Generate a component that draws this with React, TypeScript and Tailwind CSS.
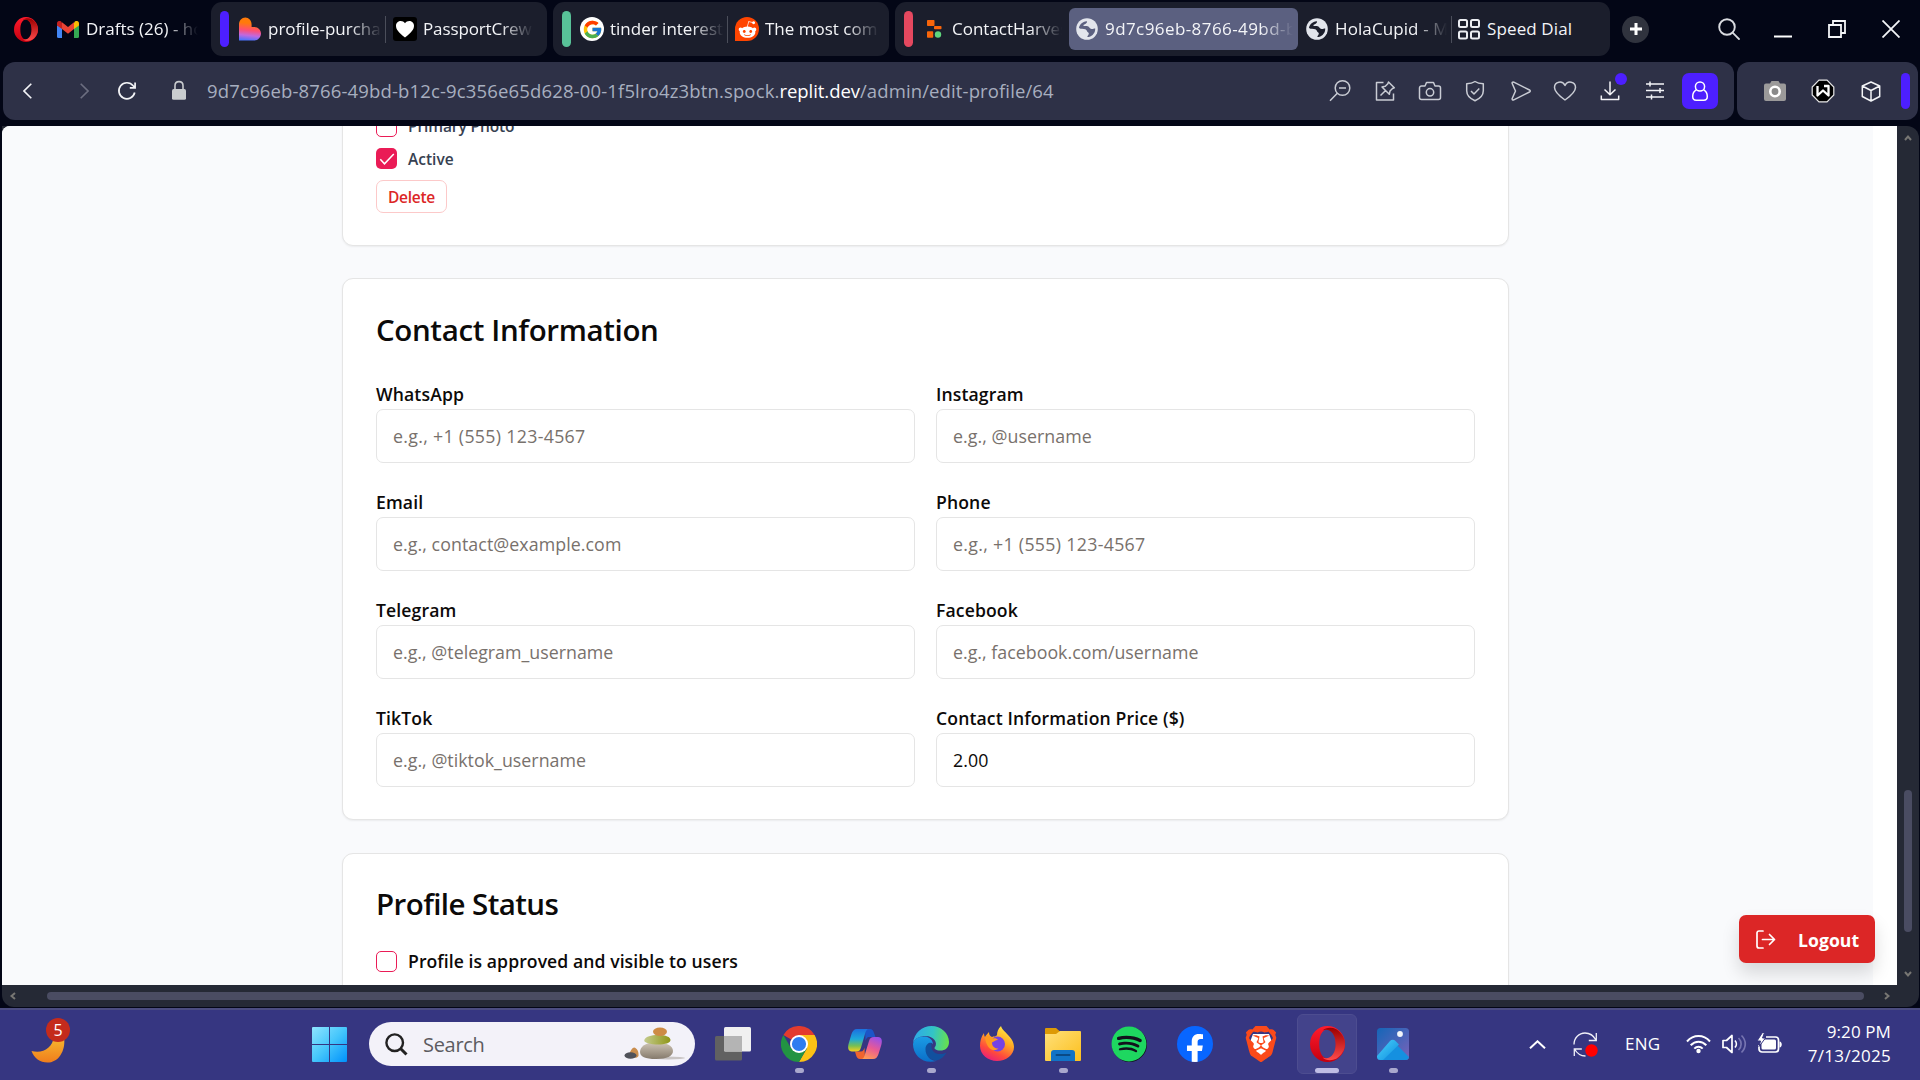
import type { ReactNode } from "react";
import { FcGoogle } from "react-icons/fc";
import { FaFacebookF, FaRedditAlien, FaSpotify } from "react-icons/fa";
import { SiBrave } from "react-icons/si";

/* ---------- Brand and app icons ---------- */

function OperaIcon({ className, id }: { className: string; id: string }) {
  return (
    <svg className={className} viewBox="0 0 36 40" preserveAspectRatio="none">
      <defs>
        <linearGradient id={`${id}a`} x1="0" y1="0" x2="0" y2="1">
          <stop offset="0" stopColor="#ff1b2d" />
          <stop offset="1" stopColor="#c4000f" />
        </linearGradient>
        <linearGradient id={`${id}b`} x1="0" y1="0" x2="0" y2="1">
          <stop offset="0" stopColor="#9c0000" />
          <stop offset="1" stopColor="#ff4b4b" />
        </linearGradient>
      </defs>
      <path fillRule="evenodd" fill={`url(#${id}a)`} d="M18 0a18 20 0 1 0 0 40a18 20 0 1 0 0-40Zm0 4c5.500 0 8.500 7 8.500 16s-3 16-8.500 16s-8.500-7-8.500-16s3-16 8.500-16Z" />
      <path fill={`url(#${id}b)`} d="M13 5c3-3.500 9-4 14-1.500C32 7 36 13 36 20s-4 13-9 16.500c-5 2.500-11 2-14-1.500c7 3.500 13.500-4 13.500-15S20 1.500 13 5Z" />
    </svg>
  );
}

function GmailIcon() {
  return (
    <svg className="h-[17px] w-[22px]" viewBox="0 0 22 17">
      <path fill="#4285f4" d="M0 4v11.500A1.500 1.500 0 0 0 1.500 17H5V7Z" />
      <path fill="#34a853" d="M22 4v11.500a1.500 1.500 0 0 1-1.500 1.500H17V7Z" />
      <path fill="#fbbc04" d="M17 2v6l5-3.500V2.500C22 .2 19.500-.8 17.800.5Z" />
      <path fill="#c5221f" d="M0 2.500v2L5 8V2L4.200.5C2.500-.8 0 .2 0 2.500Z" />
      <path fill="#ea4335" d="M5 8V1.200L11 6l6-4.800V8l-6 4.700Z" />
    </svg>
  );
}

function LovableIcon() {
  return (
    <svg className="h-6 w-6" viewBox="0 0 24 24">
      <defs>
        <linearGradient id="lov" x1=".5" y1="0" x2=".4" y2="1">
          <stop offset=".25" stopColor="#ff7a0a" />
          <stop offset=".55" stopColor="#ff4f72" />
          <stop offset=".78" stopColor="#c069e0" />
          <stop offset="1" stopColor="#4b73ff" />
        </linearGradient>
      </defs>
      <path fill="url(#lov)" d="M1 7.500C1 3.600 3.800.5 7.300.5s6.300 3 6.300 7v2.400h2.800c3.800 0 6.600 3 6.600 6.600s-2.900 7-6.600 7H1Z" />
    </svg>
  );
}

function HeartBadge() {
  return (
    <svg className="h-6 w-6" viewBox="0 0 24 24">
      <rect width="24" height="24" rx="3" fill="#000" />
      <path fill="#fff" d="M12 20.500C5.500 15.500 3 12.500 3 8.800c0-5 6.300-6.600 9-2.600c2.700-4 9-2.400 9 2.600c0 3.700-2.500 6.700-9 11.700Z" />
    </svg>
  );
}

function GoogleBadge() {
  return (
    <span className="flex h-6 w-6 items-center justify-center rounded-full bg-white">
      <FcGoogle className="h-[21px] w-[21px]" />
    </span>
  );
}

function RedditBadge() {
  return (
    <span className="flex h-6 w-6 items-center justify-center rounded-full rounded-bl-[3px] bg-[#ff4500]">
      <FaRedditAlien className="h-[19px] w-[19px] text-white" />
    </span>
  );
}

function ReplitIcon() {
  return (
    <svg className="h-6 w-6" viewBox="0 0 24 24">
      <rect x="5" y="3" width="7.500" height="6" rx=".8" fill="#f9650a" />
      <rect x="12" y="9" width="7.500" height="3.200" rx=".8" fill="#f9650a" />
      <rect x="5" y="14.300" width="6.200" height="6.500" rx=".8" fill="#f9650a" />
      <circle cx="16" cy="17.500" r="3.200" fill="#5fd57c" />
    </svg>
  );
}

function GlobeIcon({ land }: { land: string }) {
  return (
    <svg className="h-[22px] w-[22px] shrink-0" viewBox="0 0 22 22">
      <circle cx="11" cy="11" r="10.800" fill="#e2e5ec" />
      <path fill={land} d="M10.500 3.200c-4 .5-7.200 3.500-7.500 6.800c2 1.700 4.300.8 6.300 1.300c1.900.6 1.300 2.300 2.900 3.200c1.100.6.600 2.200-.6 3.500c-.8.9.2 1.300 1.200 1c4-1.300 6.600-4.500 6.400-8.600c-1.500-.2-2 1-3.700.6c-2-.5-2-2.300-3.800-2.800c-1.600-.5-3.200.1-4.200-.5c-.8-.8 1.100-1.200 2.200-1.900c1.200-.9 2-2.500.8-2.600Z" />
    </svg>
  );
}

function SpeedDialIcon() {
  return (
    <svg className="h-[21px] w-[22px]" viewBox="0 0 22 21" fill="none" stroke="#eceef2" strokeWidth="2">
      <rect x="1" y="1" width="8" height="7" rx="1.500" />
      <rect x="13" y="1" width="8" height="7" rx="1.500" />
      <rect x="1" y="12.500" width="8" height="7" rx="1.500" />
      <rect x="13" y="12.500" width="8" height="7" rx="1.500" />
    </svg>
  );
}

/* ---------- Tab bar ---------- */

const fade = "overflow-hidden whitespace-nowrap [mask-image:linear-gradient(to_right,black_calc(100%-34px),transparent_calc(100%-2px))]";

function TabText({ children, className }: { children: ReactNode; className: string }) {
  return <span className={`${fade} shrink-0 text-[17px] leading-6 text-[#f3f4f7] ${className}`}>{children}</span>;
}

function Divider({ className = "w-px" }: { className?: string }) {
  return <span className={`h-[27px] shrink-0 bg-[#4b4e5a] ${className}`} />;
}

function TabBar() {
  return (
    <header className="flex h-[58px] items-center pl-3.5 pr-5">
      <OperaIcon id="op1" className="h-[25px] w-6" />
      <div className="ml-[19px] flex items-center gap-[7px]">
        <GmailIcon />
        <TabText className="w-[114px]">Drafts (26) - ho</TabText>
      </div>

      <div className="ml-[11px] flex h-[54px] w-[336px] items-center rounded-[11px] bg-[#1b1e2c] pl-[9px]">
        <span className="h-9 w-[9px] rounded-full bg-[#4d1fff]" />
        <div className="ml-[9px] flex items-center gap-1.5">
          <LovableIcon />
          <TabText className="w-[116px]">profile-purchas</TabText>
        </div>
        <Divider className="ml-px w-px" />
        <div className="ml-[7px] flex items-center gap-1.5">
          <HeartBadge />
          <TabText className="w-[112px] tracking-[-0.12px]">PassportCrew</TabText>
        </div>
      </div>

      <div className="ml-1.5 flex h-[54px] w-[336px] items-center rounded-[11px] bg-[#1b1e2c] pl-[9px]">
        <span className="h-9 w-[9px] rounded-full bg-[#58c298]" />
        <div className="ml-[9px] flex items-center gap-1.5">
          <GoogleBadge />
          <TabText className="w-[116px]">tinder interests</TabText>
        </div>
        <Divider className="ml-px w-px" />
        <div className="ml-[7px] flex items-center gap-1.5">
          <RedditBadge />
          <TabText className="w-[116px]">The most comm</TabText>
        </div>
      </div>

      <div className="ml-1.5 flex h-[54px] w-[715px] items-center rounded-[11px] bg-[#1b1e2c] pl-[9px]">
        <span className="h-9 w-[9px] rounded-full bg-[#e5485f]" />
        <div className="ml-[9px] flex items-center gap-1.5">
          <ReplitIcon />
          <TabText className="w-[112px]">ContactHarves</TabText>
        </div>
        <div className="ml-[5px] flex h-[42px] w-[229px] items-center gap-[7px] rounded-md bg-[#5b6080] pl-[7px]">
          <GlobeIcon land="#5b6080" />
          <TabText className="w-[190px] tracking-[0.42px]">9d7c96eb-8766-49bd-b1</TabText>
        </div>
        <div className="ml-[8px] flex items-center gap-[7px]">
          <GlobeIcon land="#1b1e2c" />
          <TabText className="w-[114px] tracking-[0.1px]">HolaCupid - Me</TabText>
        </div>
        <Divider className="ml-[2px] w-px" />
        <div className="ml-1.5 flex items-center gap-[7px]">
          <SpeedDialIcon />
          <span className="whitespace-nowrap text-[17px] leading-6 tracking-[0.12px] text-[#f3f4f7]">Speed Dial</span>
        </div>
      </div>

      <button className="ml-3 flex h-[27px] w-[27px] items-center justify-center rounded-full bg-[#30333e]">
        <svg className="h-3.5 w-3.5" viewBox="0 0 14 14" stroke="#fff" strokeWidth="3">
          <path d="M7 1v12M1 7h12" />
        </svg>
      </button>

      <div className="ml-auto flex items-center">
        <svg className="h-[22px] w-[22px]" viewBox="0 0 22 22" fill="none" stroke="#d9dbe0" strokeWidth="1.900">
          <circle cx="9" cy="9" r="7.800" />
          <path d="m14.600 14.600 7 7" />
        </svg>
        <svg className="ml-[34px] h-[18px] w-[18px]" viewBox="0 0 18 18">
          <path d="M0 16.500h18" stroke="#fff" strokeWidth="2" />
        </svg>
        <svg className="ml-9 h-[18px] w-[18px]" viewBox="0 0 18 18" fill="none" stroke="#f3f4f7" strokeWidth="1.800">
          <path d="M1 5h12v12H1ZM5 5V1h12v12h-4" />
        </svg>
        <svg className="ml-9 h-[18px] w-[18px]" viewBox="0 0 18 18" fill="none" stroke="#f3f4f7" strokeWidth="1.800">
          <path d="m.5.5 17 17M17.500.5l-17 17" />
        </svg>
      </div>
    </header>
  );
}

/* ---------- Address bar ---------- */

function LineIcon({ children, className = "" }: { children: ReactNode; className?: string }) {
  return (
    <svg className={`h-6 w-6 shrink-0 ${className}`} viewBox="0 0 24 24" fill="none" stroke="#c9ccd4" strokeWidth="1.500" strokeLinejoin="round">
      {children}
    </svg>
  );
}

function AddressBar() {
  return (
    <div className="mt-1 flex h-[58px] gap-[3px] pl-[3px] pr-0.5">
      <div className="flex w-[1731px] items-center rounded-xl bg-[#2e3147]">
        <svg className="ml-5 h-4 w-[9px]" viewBox="0 0 9 16" fill="none" stroke="#f3f4f7" strokeWidth="1.600">
          <path d="M8.300.7 1 8l7.300 7.300" />
        </svg>
        <svg className="ml-12 h-4 w-[9px]" viewBox="0 0 9 16" fill="none" stroke="#6c6e80" strokeWidth="1.600">
          <path d="M.7.700 8 8 .7 15.300" />
        </svg>
        <svg className="ml-7 h-5 w-5" viewBox="0 0 20 20" fill="none" stroke="#f3f4f7" strokeWidth="1.700">
          <path d="M17.700 11.500a8 8 0 1 1-1.500-6.700l1.300 1.500M18.100 1.500v5.300h-5.300" />
        </svg>
        <svg className="-mt-0.5 ml-[35px] h-[21px] w-[14px]" viewBox="0 0 15 21">
          <path d="M3.200 9V5.500C3.200 2.800 5 1 7.500 1s4.300 1.800 4.300 4.500V9" fill="none" stroke="#c9cccf" strokeWidth="1.700" />
          <rect y="9" width="15" height="11.500" rx="1.800" fill="#c9cccf" />
        </svg>
        <div className="ml-[21px] whitespace-nowrap text-[18.5px] leading-6 text-[#a7aebf]">
          <span className="tracking-[0.15px]">9d7c96eb-8766-49bd-b12c-9c356e65d628-00-1f5lro4z3btn.spock.</span>
          <span className="tracking-[-0.06px] text-white">replit.dev</span>
          <span className="tracking-[0.12px]">/admin/edit-profile/64</span>
        </div>
        <div className="ml-auto flex items-center pr-4">
          <LineIcon>
            <circle cx="14.500" cy="9" r="7.300" />
            <path d="M11 9h7M9.300 14.200 2 21.800" />
          </LineIcon>
          <LineIcon className="ml-[21px]">
            <path d="M10.500 3.500h-7v17.500h17v-6.500M15.500 3l5.800 5.800-1.800.7-2.500 2.500-.7 3.300-7.300-7.300 3.300-.7 2.500-2.500ZM12.300 11.800 7.500 16.500" />
          </LineIcon>
          <LineIcon className="ml-[21px]">
            <path d="M3.500 7H7l1.500-3.500h7L17 7h3.500a2 2 0 0 1 2 2v9.500a2 2 0 0 1-2 2h-17a2 2 0 0 1-2-2V9a2 2 0 0 1 2-2Z" />
            <circle cx="12" cy="13.300" r="3.700" />
          </LineIcon>
          <LineIcon className="ml-[21px]">
            <path d="M12 2.500c2.500 1.700 5 2.200 8.300 2.300v7c0 4.700-3 7.700-8.300 10c-5.300-2.300-8.300-5.300-8.300-10v-7c3.300-.1 5.800-.6 8.300-2.300ZM8 12l3 3 5.300-5.500" />
          </LineIcon>
          <LineIcon className="ml-[22px]">
            <path d="M4.800 3.200 20.500 11c1 .5 1 1.500 0 2L4.800 20.800c-1.300.6-2-.4-1.500-1.500L6.500 12 3.300 4.700c-.5-1.100.2-2.100 1.500-1.500Z" />
          </LineIcon>
          <LineIcon className="ml-[20px]">
            <path d="M12 21C5 16 1.500 12.500 1.500 8.500c0-6 8-7.500 10.500-2c2.500-5.500 10.500-4 10.500 2C22.500 12.500 19 16 12 21Z" />
          </LineIcon>
          <div className="relative ml-[21px] h-6 w-6">
            <LineIcon>
              <path stroke="#f3f4f7" d="M12 2.500v13M6.500 10.500l5.500 5.300 5.500-5.300M3.300 16.500v4h17.400v-4" />
            </LineIcon>
            <span className="absolute -top-1.5 left-[17px] h-3 w-3 rounded-full bg-[#4d1fff]" />
          </div>
          <LineIcon className="ml-[21px]">
            <path stroke="#f3f4f7" d="M3 5h18M3 11.500h18M3 18h18M7 2.500v5M17 9v5M8.500 15.500v5" />
          </LineIcon>
          <button className="ml-[15px] flex h-9 w-9 items-center justify-center rounded-[7px] bg-[#4d1fff]">
            <svg className="h-5 w-5" viewBox="0 0 20 20" fill="none" stroke="#fff" strokeWidth="1.500">
              <circle cx="10" cy="5.500" r="4.600" />
              <path d="M6.500 8.700C4 10.200 2.700 12.500 2.700 15.500c0 2.500 1.300 3.700 3.500 3.700h7.600c2.200 0 3.500-1.200 3.500-3.700c0-3-1.300-5.300-3.800-6.800" />
            </svg>
          </button>
        </div>
      </div>

      <div className="flex flex-1 items-center rounded-xl bg-[#2e3147] pl-[26px]">
        <svg className="h-[22px] w-6" viewBox="0 0 24 22">
          <path fill="#9b9a9a" d="M3 3.500h4L8.500 1h7L17 3.500h4a2 2 0 0 1 2 2V19a2 2 0 0 1-2 2H3a2 2 0 0 1-2-2V5.500a2 2 0 0 1 2-2Z" />
          <circle cx="12" cy="11.500" r="4.700" fill="#8a8a8a" stroke="#fff" strokeWidth="2.600" />
        </svg>
        <svg className="ml-6 h-6 w-6" viewBox="0 0 24 24" fill="none">
          <path fill="#000" stroke="#e8e8e8" strokeWidth="1.200" d="M8 1.200h8L22.800 8v8L16 22.800H8L1.200 16V8Z" />
          <path stroke="#fff" strokeWidth="2.300" strokeLinejoin="round" d="M6.500 7v9.500l5.500-5 5.500 5V7h-4.500" />
        </svg>
        <svg className="ml-[26px] h-[21px] w-5" viewBox="0 0 20 21" fill="none" stroke="#f3f4f7" strokeWidth="1.500" strokeLinejoin="round">
          <path d="m10 1 8.700 4v10.500L10 20l-8.700-4.500V5ZM1.300 5 10 9.500 18.700 5M10 9.500V20" />
        </svg>
        <span className="ml-auto mr-2 h-9 w-[9px] rounded-full bg-[#4d1fff]" />
      </div>
    </div>
  );
}

/* ---------- Profile form ---------- */

function Card({ children, className = "" }: { children: ReactNode; className?: string }) {
  return (
    <section className={`ml-[340px] w-[1167px] rounded-[11px] border border-[#e5e5e5] bg-white px-[33px] shadow-[0_1px_2px_rgba(0,0,0,0.06)] ${className}`}>
      {children}
    </section>
  );
}

function Checkbox({ checked = false }: { checked?: boolean }) {
  return checked ? (
    <span className="flex h-[21px] w-[21px] items-center justify-center rounded-[5px] bg-[#ea1b56]">
      <svg className="h-4 w-4" viewBox="0 0 16 16" fill="none" stroke="#fff" strokeWidth="1.500">
        <path d="m1.300 8.300 4.200 4.500L14.800 3" />
      </svg>
    </span>
  ) : (
    <span className="h-[21px] w-[21px] rounded-[5px] border border-[#ea1b56]" />
  );
}

const fields = [
  { label: "WhatsApp", placeholder: "e.g., +1 (555) 123-4567", tracking: "tracking-[0.3px]" },
  { label: "Instagram", placeholder: "e.g., @username", tracking: "tracking-[0.05px]" },
  { label: "Email", placeholder: "e.g., contact@example.com", tracking: "tracking-[0.07px]" },
  { label: "Phone", placeholder: "e.g., +1 (555) 123-4567", tracking: "tracking-[0.3px]" },
  { label: "Telegram", placeholder: "e.g., @telegram_username", tracking: "tracking-[0.02px]" },
  { label: "Facebook", placeholder: "e.g., facebook.com/username", tracking: "tracking-[0.02px]" },
  { label: "TikTok", placeholder: "e.g., @tiktok_username", tracking: "tracking-[0.03px]" },
  { label: "Contact Information Price ($)", value: "2.00", tracking: "tracking-[0.1px]" },
];

function ProfilePage() {
  return (
    <main className="relative flex-1 overflow-hidden rounded-tl-lg bg-white">
      <div className="flow-root h-full w-[1871px] bg-[#f9fafc]">
        <Card className="-mt-10 flex h-[160px] flex-col items-start gap-[11px] pt-[29px]">
          <div className="flex h-[21px] items-center gap-[11px]">
            <Checkbox />
            <span className="text-[15.5px] font-semibold leading-[21px] tracking-[-0.1px] text-[#374151]">Primary Photo</span>
          </div>
          <div className="flex h-[21px] items-center gap-[11px]">
            <Checkbox checked />
            <span className="pt-0.5 text-[15.5px] font-semibold leading-[21px] text-[#374151]">Active</span>
          </div>
          <button className="h-[33px] w-[71px] rounded-[7px] border border-[#fcc9c9] pt-0.5 text-[15.5px] font-semibold leading-none tracking-[-0.25px] text-[#dc2626]">
            Delete
          </button>
        </Card>

        <Card className="mt-8 h-[542px] pt-8">
          <h2 className="pt-px text-[29.5px] font-semibold leading-9 tracking-[-0.36px] text-[#0c0a09]">Contact Information</h2>
          <div className="mt-[35px] grid grid-cols-2 gap-x-[21px] gap-y-7">
            {fields.map((f) => (
              <label key={f.label} className="block">
                <span className="block pb-[3px] text-[17.6px] font-semibold leading-[23px] tracking-[0.12px] text-[#0c0a09]">{f.label}</span>
                <input
                  className={`block h-[54px] w-full rounded-[7px] border border-[#e5e5e5] bg-white px-4 text-[17.8px] text-[#0c0a09] placeholder:text-[#78716c] ${f.tracking}`}
                  placeholder={f.placeholder}
                  defaultValue={f.value}
                />
              </label>
            ))}
          </div>
        </Card>

        <Card className="mt-[33px] h-[200px] pt-8">
          <h2 className="text-[29.5px] font-semibold leading-9 tracking-[-0.58px] text-[#0c0a09]">Profile Status</h2>
          <div className="mt-[29px] flex items-center gap-[11px]">
            <Checkbox />
            <span className="text-[17.6px] font-semibold leading-[21px] tracking-[0.07px] text-[#0c0a09]">Profile is approved and visible to users</span>
          </div>
        </Card>
      </div>

      <button className="absolute bottom-[22px] right-[22px] flex h-12 w-[136px] items-center rounded-[7px] bg-[#dc2626] pl-[17px] text-white shadow-[0_10px_18px_rgba(0,0,0,0.14)]">
        <svg className="h-[19px] w-5" viewBox="0 0 20 19" fill="none" stroke="#fff" strokeWidth="1.700" strokeLinecap="round" strokeLinejoin="round">
          <path d="M7 1H3a2 2 0 0 0-2 2v13a2 2 0 0 0 2 2h4M6.500 9.500h12M13.500 4.500l5 5-5 5" />
        </svg>
        <span className="ml-[22px] pt-0.5 text-[17.6px] font-bold leading-6 tracking-[0.05px]">Logout</span>
      </button>
    </main>
  );
}

function Arrow({ className, d }: { className: string; d: string }) {
  return (
    <svg className={className} viewBox="0 0 8 8" fill="none" stroke="#777673" strokeWidth="2">
      <path d={d} />
    </svg>
  );
}

function Viewport() {
  return (
    <div className="ml-0.5 mr-px mt-1.5 flex h-[881px] flex-col overflow-hidden rounded-bl-xl rounded-r-xl bg-[#252935]">
      <div className="flex h-[859px]">
        <ProfilePage />
        <div className="flex w-[22px] flex-col items-center pb-[7px] pt-2">
          <Arrow className="h-2 w-2" d="m1 6 3-3.500L7 6" />
          <span className="mt-auto h-[142px] w-2 rounded-full bg-[#4a4c62]" />
          <Arrow className="mt-[38px] h-2 w-2" d="m1 2 3 3.500L7 2" />
        </div>
      </div>
      <div className="flex flex-1 items-center pl-[7px]">
        <Arrow className="h-2 w-2" d="M6 1 2.500 4 6 7" />
        <span className="ml-[30px] h-2 w-[1817px] rounded-full bg-[#4a4c62]" />
        <Arrow className="ml-[19px] h-2 w-2" d="m2 1 3.500 3L2 7" />
      </div>
    </div>
  );
}

/* ---------- Taskbar ---------- */

function MoonWidget() {
  return (
    <div className="relative mb-1 ml-[31px] h-12 w-10">
      <svg className="absolute left-0 top-[19px] h-[26px] w-[34px]" viewBox="0 0 34 26">
        <defs>
          <linearGradient id="moon" x1="0" y1="0" x2="0" y2="1">
            <stop offset="0" stopColor="#f7b92f" />
            <stop offset="1" stopColor="#f07d1c" />
          </linearGradient>
        </defs>
        <path fill="url(#moon)" d="M.5 14C12 17 21 11 23 0h10c2 13-5 25.500-16.500 25.500C9 25.500 3 21 .5 14Z" />
      </svg>
      <span className="absolute left-[15px] top-0 flex h-6 w-6 items-center justify-center rounded-full bg-[#c42b1c] text-[16px] leading-none text-white">5</span>
    </div>
  );
}

function WindowsIcon() {
  return (
    <svg className="h-[35px] w-[35px]" viewBox="0 0 35 35">
      <defs>
        <linearGradient id="win" x1="0" y1="0" x2="1" y2="1">
          <stop offset="0" stopColor="#8fe5ff" />
          <stop offset=".5" stopColor="#45c6fb" />
          <stop offset="1" stopColor="#0091fb" />
        </linearGradient>
      </defs>
      <path fill="url(#win)" d="M1 0h16v17H0V1a1 1 0 0 1 1-1ZM18 0h16a1 1 0 0 1 1 1v16H18ZM0 18h17v17H1a1 1 0 0 1-1-1ZM18 18h17v16a1 1 0 0 1-1 1H18Z" />
    </svg>
  );
}

function Stones() {
  return (
    <svg className="h-[34px] w-[62px]" viewBox="0 0 62 34">
      <defs>
        <linearGradient id="st1" x1="0" y1="0" x2="0" y2="1">
          <stop offset="0" stopColor="#cfc5b5" />
          <stop offset="1" stopColor="#857a6c" />
        </linearGradient>
        <linearGradient id="st2" x1="0" y1="0" x2="1" y2="0">
          <stop offset="0" stopColor="#c4cb8e" />
          <stop offset="1" stopColor="#8f9617" />
        </linearGradient>
      </defs>
      <ellipse cx="44" cy="31" rx="17" ry="1.500" fill="#c9c5c4" />
      <path fill="url(#st1)" d="M16 25c0-5 5-9 13-9.500c11-.5 20 2 20 8.500c0 5-6 8-17 8s-16-2.500-16-7Z" />
      <path fill="url(#st2)" d="M20.500 12.500C22 9.500 27 8 34 8c8 0 12.500 2 12.500 5s-5.500 4.500-12.500 4.500S18.500 16 20.500 12.500Z" />
      <ellipse cx="36" cy="4.800" rx="7" ry="4.200" fill="#cd8b45" />
      <path fill="#c98d4d" d="M5 28c1-4 3-7 5-7.500c3 .5 5 4 4.500 8.500c-1 2-5 2.500-6 1Z" />
      <ellipse cx="6.500" cy="28.500" rx="6" ry="3.300" fill="#50525a" />
    </svg>
  );
}

function TaskViewIcon() {
  return (
    <svg className="h-9 w-9" viewBox="0 0 36 36">
      <rect x="0" y="10" width="27" height="24.500" rx="1.500" fill="#616161" />
      <rect x="9" y="1" width="27" height="24.500" rx="1.500" fill="#f0f0f0" />
      <path fill="#b4b4b4" d="M9 10h18v15.500H10.500A1.500 1.500 0 0 1 9 24Z" />
    </svg>
  );
}

function ChromeIcon() {
  return (
    <svg className="h-9 w-9" viewBox="0 0 36 36">
      <path fill="#e33b2e" d="M18 18 2.400 9a18 18 0 0 1 31.200 0Z" />
      <path fill="#fbc116" d="M18 9h15.600A18 18 0 0 1 18 36l7.800-13.500Z" />
      <path fill="#229342" d="M2.400 9A18 18 0 0 0 18 36l7.800-13.500L10.200 22.500Z" />
      <circle cx="18" cy="18" r="9" fill="#fff" />
      <circle cx="18" cy="18" r="7.100" fill="#2e7cf0" />
    </svg>
  );
}

function CopilotIcon() {
  return (
    <svg className="h-9 w-9" viewBox="0 0 36 36">
      <defs>
        <linearGradient id="cp1" x1=".4" y1="0" x2=".4" y2="1">
          <stop offset="0" stopColor="#1c6fe0" />
          <stop offset=".45" stopColor="#1da9d9" />
          <stop offset=".75" stopColor="#78bf52" />
          <stop offset="1" stopColor="#fbcf1c" />
        </linearGradient>
        <linearGradient id="cp2" x1=".7" y1="0" x2=".3" y2="1">
          <stop offset="0" stopColor="#9a50e8" />
          <stop offset=".5" stopColor="#e95a94" />
          <stop offset="1" stopColor="#ff9a55" />
        </linearGradient>
      </defs>
      <path fill="#1c55c8" d="M18 3h5c2 0 3.300 1.300 4 4l1.500 4H22c-2 0-3 2-3.500 4Z" />
      <path fill="#f0642f" d="M18 33h-5c-2 0-3.300-1.300-4-4l-1-3.500h6c2 0 3-2 3.500-4Z" />
      <path fill="url(#cp1)" d="M10 3h12c-2.500 0-3.200 2-4 5l-4 13.500c-1 3-2 4-5 4H5c-4 0-4.500-4-3.300-8L4.500 8C5.500 5 7 3 10 3Z" />
      <path fill="url(#cp2)" d="M26 33H14c2.500 0 3.200-2 4-5l4-13c1-3 2-4 5-4h4c4 0 4.500 4 3.300 8L31.500 28c-1 3-2.500 5-5.500 5Z" />
    </svg>
  );
}

function EdgeIcon() {
  return (
    <svg className="h-9 w-9" viewBox="0 0 36 36">
      <defs>
        <linearGradient id="ed1" x1="0" y1=".3" x2="1" y2=".4">
          <stop offset="0" stopColor="#2ea8e8" />
          <stop offset=".55" stopColor="#33c4c6" />
          <stop offset="1" stopColor="#66e04f" />
        </linearGradient>
        <linearGradient id="ed2" x1="0" y1="0" x2="0" y2="1">
          <stop offset="0" stopColor="#1b9ce5" />
          <stop offset="1" stopColor="#0a6fc9" />
        </linearGradient>
      </defs>
      <path fill="#11509e" d="M12 17c-4 9 3 17 11.500 17.500c4-1 8-4 10-8c-7 3.500-15 1-15-6c0-3 0-5-2-5.500Z" />
      <path fill="url(#ed2)" d="M0 18C1 12 7 10 12 10.500c5 .5 8 4 8 8c-1-3-7-2-7.500 4C12 29 17 35 24 34.800C11 39 0 30 0 18Z" />
      <path fill="url(#ed1)" d="M0 17C1 7 9 0 18.500 0C28 0 36 7 36 16c0 6-4 8.500-8.500 8.500c-5 0-7-2-5.500-3.500c3-4-1-11-9.500-11C7 10 2 12 0 17Z" />
    </svg>
  );
}

function FirefoxIcon() {
  return (
    <svg className="h-9 w-9" viewBox="0 0 36 36">
      <defs>
        <linearGradient id="ff" x1=".8" y1="0" x2=".3" y2="1">
          <stop offset="0" stopColor="#fff14a" />
          <stop offset=".4" stopColor="#ffab24" />
          <stop offset=".75" stopColor="#ff4a3c" />
          <stop offset="1" stopColor="#e81e7c" />
        </linearGradient>
      </defs>
      <path fill="url(#ff)" d="M22 0c1 4 4 5 7 9c3 3 6 7 6 12c0 8-8 14-17 14S1 28.500 1 20c0-5 1-9 4-13c0 2 .5 3 1 4c1-2 3-4 4-5c0 3 1 4 3 5c2-1 4 0 5-2c0-3 1-6 4-9Z" />
      <circle cx="18.500" cy="18" r="7.500" fill="#7542e5" />
      <path fill="#ff9a1f" d="M6 11c3-1 6-.5 8 1.500c2-.5 4 0 5 1.500c-3 0-4 1.500-6 2.500c0 4 3 6 6.500 6C14 27 7 22 6 11Z" />
    </svg>
  );
}

function ExplorerIcon() {
  return (
    <svg className="h-9 w-9" viewBox="0 0 36 36">
      <defs>
        <linearGradient id="fe" x1="0" y1="0" x2="1" y2="1">
          <stop offset="0" stopColor="#ffe07a" />
          <stop offset="1" stopColor="#fcbf1d" />
        </linearGradient>
      </defs>
      <path fill="#dd9a06" d="M0 3a1 1 0 0 1 1-1h10l4 3.500V9H0Z" />
      <path fill="url(#fe)" d="M0 8h11l4-3h20a1 1 0 0 1 1 1v28a1 1 0 0 1-1 1H1a1 1 0 0 1-1-1Z" />
      <path fill="#1173c6" d="M6 35v-8a3 3 0 0 1 3-3h18a3 3 0 0 1 3 3v8Z" />
      <path stroke="#0a4a85" strokeWidth="2" strokeLinecap="round" d="M11.500 29h13" />
    </svg>
  );
}

function SpotifyIcon() {
  return (
    <span className="flex h-[35px] w-[35px] items-center justify-center rounded-full bg-[#12121c]">
      <FaSpotify className="h-9 w-9 shrink-0 text-[#1ed760]" />
    </span>
  );
}

function FacebookIcon() {
  return (
    <span className="flex h-9 w-9 items-end justify-center overflow-hidden rounded-full bg-[#0866ff]">
      <FaFacebookF className="-mb-0.5 h-[30px] w-[30px] text-white" />
    </span>
  );
}

function BraveIcon() {
  return (
    <span className="relative flex h-9 w-9 items-center justify-center">
      <svg className="absolute h-9 w-8" viewBox="0 0 32 36">
        <path fill="#fff" d="M8 8h16l3 8-4 12-7 4-7-4-4-12Z" />
      </svg>
      <SiBrave className="relative h-9 w-9 text-[#fb4a1a]" />
    </span>
  );
}

function PhotosIcon() {
  return (
    <svg className="h-9 w-9" viewBox="0 0 36 36">
      <defs>
        <linearGradient id="ph1" x1="0" y1="0" x2="1" y2="1">
          <stop offset="0" stopColor="#1466b8" />
          <stop offset="1" stopColor="#7a62b8" />
        </linearGradient>
        <linearGradient id="ph2" x1="0" y1="0" x2="1" y2="1">
          <stop offset="0" stopColor="#4bd2fa" />
          <stop offset="1" stopColor="#0c8ce0" />
        </linearGradient>
      </defs>
      <rect x="2" y="2" width="32" height="32" rx="3.500" fill="url(#ph1)" />
      <path fill="#1590e0" d="M5 34 20 17l14 14a3.500 3.500 0 0 1-3.500 3Z" />
      <path fill="url(#ph2)" d="M2 30 15 15c1.500-1.700 4-1.700 5.500 0l3.500 3.500L8 34H5.500A3.500 3.500 0 0 1 2 30.500Z" />
      <circle cx="25" cy="8" r="2.900" fill="#f2f6fa" />
    </svg>
  );
}

function TaskApp({ children, running = false }: { children: ReactNode; running?: boolean }) {
  return (
    <div className="relative flex h-[60px] w-[66px] items-center justify-center">
      {children}
      {running && <span className="absolute bottom-px h-[5px] w-[9px] rounded-full bg-[#a9a8cd]" />}
    </div>
  );
}

function Taskbar() {
  return (
    <footer className="mt-px flex h-[72px] items-center border-t-2 border-[#4b4c80] bg-[#363681] pb-0.5 text-white">
      <MoonWidget />
      <div className="ml-[241px]">
        <WindowsIcon />
      </div>
      <div className="ml-[22px] flex h-11 w-[326px] items-center rounded-full bg-[#f3f2f9] pl-4 pr-[9px]">
        <svg className="h-[23px] w-[23px]" viewBox="0 0 23 23" fill="none" stroke="#222" strokeWidth="2.400">
          <circle cx="9.700" cy="9.700" r="8.300" />
          <path strokeWidth="3" d="m15.500 15.500 6 6" />
        </svg>
        <span className="ml-[15px] pt-px text-[20px] leading-7 tracking-[-0.3px] text-[#5c5b60]">Search</span>
        <div className="ml-auto">
          <Stones />
        </div>
      </div>
      <div className="ml-[5px] flex items-center">
        <TaskApp><TaskViewIcon /></TaskApp>
        <TaskApp running><ChromeIcon /></TaskApp>
        <TaskApp><CopilotIcon /></TaskApp>
        <TaskApp running><EdgeIcon /></TaskApp>
        <TaskApp><FirefoxIcon /></TaskApp>
        <TaskApp running><ExplorerIcon /></TaskApp>
        <TaskApp><SpotifyIcon /></TaskApp>
        <TaskApp><FacebookIcon /></TaskApp>
        <TaskApp><BraveIcon /></TaskApp>
        <div className="relative mx-[3px] flex h-[60px] w-[60px] items-center justify-center rounded-md border border-[#4d4d90] bg-[#43438b]">
          <OperaIcon id="op2" className="h-9 w-[35px]" />
          <span className="absolute bottom-0 h-[5px] w-6 rounded-full bg-[#bfbde5]" />
        </div>
        <TaskApp running><PhotosIcon /></TaskApp>
      </div>

      <div className="ml-auto flex items-center pr-[29px]">
        <svg className="h-[9px] w-[17px]" viewBox="0 0 17 9" fill="none" stroke="#fff" strokeWidth="2">
          <path d="m1 8.300 7.500-7 7.500 7" />
        </svg>
        <svg className="ml-[27px] h-[25px] w-[25px]" viewBox="0 0 25 25" fill="none" stroke="#f0f0f8" strokeWidth="1.300">
          <path d="M1 12.500C1 6 6 1 12 1c4.500 0 8.500 2.500 11 7M23.300 1v7.500h-7.500M1.300 24v-7h7.500M1.500 17c2.500 4.500 6.500 7 11 7" />
          <circle cx="18.500" cy="18.500" r="6.200" fill="#f00" stroke="none" />
        </svg>
        <span className="ml-[27px] w-[36px] whitespace-nowrap text-[17px] leading-6 tracking-[0.3px]">ENG</span>
        <svg className="ml-[25px] h-5 w-[25px]" viewBox="0 0 25 20" fill="none" stroke="#fff" strokeWidth="2">
          <path d="M1 7.500c6.500-7.200 16.500-7.200 23 0M4.700 11.300c4.500-4.800 11.100-4.800 15.600 0M8.300 14.600c2.500-2.500 5.900-2.500 8.400 0" />
          <circle cx="12.500" cy="17" r="2.200" fill="#fff" stroke="none" />
        </svg>
        <svg className="ml-[11px] h-5 w-[25px]" viewBox="0 0 25 20" fill="none" stroke="#fff" strokeWidth="1.700" strokeLinejoin="round">
          <path d="M1 6.500h3.500L10 1.500v17l-5.500-5H1ZM13 6.500c1.800 2 1.800 5 0 7" />
          <path stroke="#7674b0" d="M16.500 4c3.500 3.500 3.500 8.500 0 12M19.500 1.500c5 5 5 12 0 17" />
        </svg>
        <svg className="-mt-0.5 ml-[10px] h-[21px] w-[26px]" viewBox="0 0 26 21">
          <path fill="none" stroke="#fff" strokeWidth="1.700" d="M9 4h9.500a3 3 0 0 1 3 3v9a3 3 0 0 1-3 3H5a3 3 0 0 1-3-3v-4" />
          <rect x="4.500" y="6.500" width="14.500" height="10" rx="1.500" fill="#fff" />
          <path fill="#fff" d="M22.500 8.500c3 .3 3 5.700 0 6Z" />
          <path fill="#fff" stroke="#363681" strokeWidth="1" d="M5.500-.5 0 8h3.500L2 13.500 8.500 5H5.500L7.500-.5Z" />
        </svg>
        <div className="ml-[24px] flex w-[84px] flex-col items-end whitespace-nowrap text-[17px] leading-6">
          <span className="tracking-[0.1px]">9:20 PM</span>
          <span className="tracking-[0.3px]">7/13/2025</span>
        </div>
      </div>
    </footer>
  );
}

export default function App() {
  return (
    <div className="flex h-[1080px] w-[1920px] flex-col overflow-hidden bg-[#030616] font-['Open_Sans','Noto_Sans',sans-serif]">
      <TabBar />
      <AddressBar />
      <Viewport />
      <Taskbar />
    </div>
  );
}
